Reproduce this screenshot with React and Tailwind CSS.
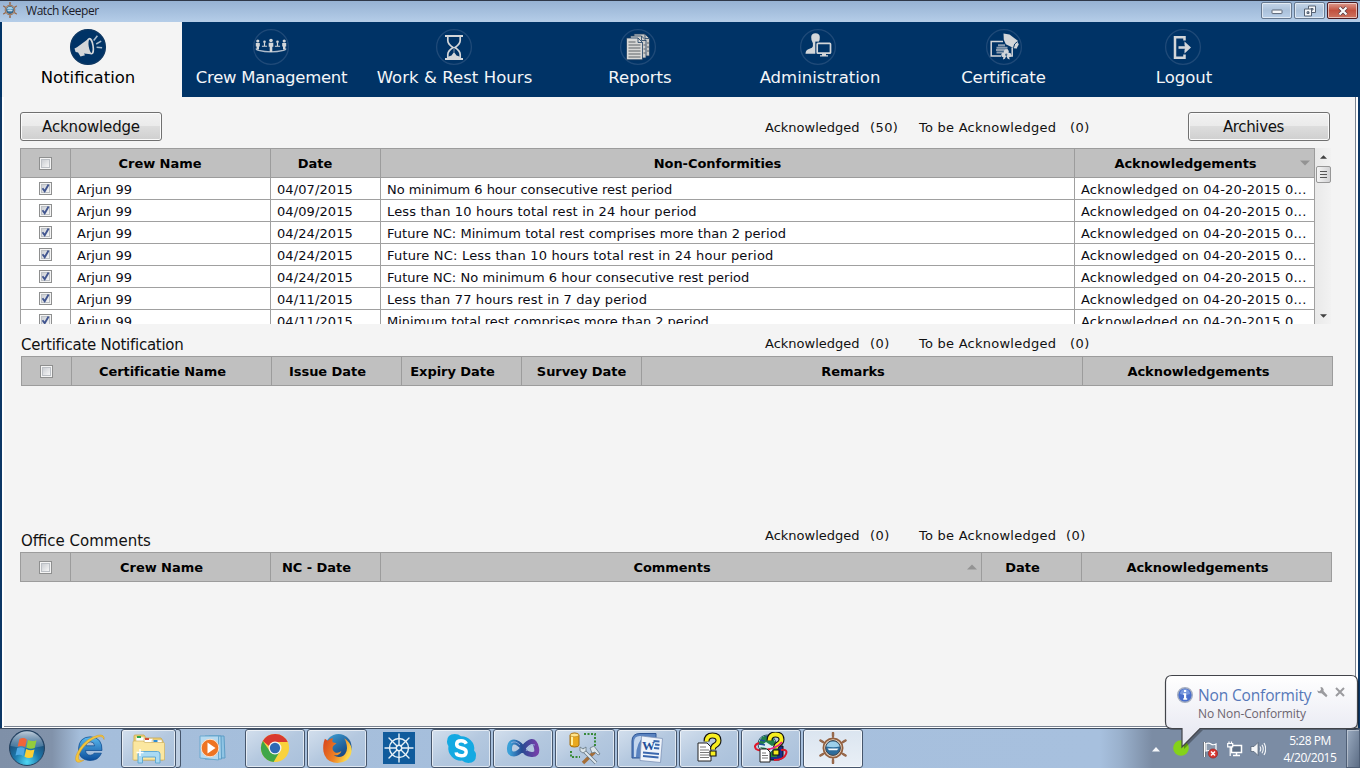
import React from "react";

const VERDANA = "font-['DejaVu_Sans',Verdana,sans-serif]";
const SEGOE = "font-['Open_Sans','Noto_Sans',sans-serif]";

/* ---------- Ship wheel, used by the title bar and the taskbar ---------- */
function ShipWheel({ className }) {
  return (
    <svg viewBox="0 0 32 32" className={className}>
      <g stroke="#97694c" strokeWidth="1.500" strokeLinecap="round">
        <path d="M16 1v30M3.500 8.500l25 15M3.500 23.500l25-15" />
        <path d="M16 1v3M16 28v3M3.500 8.500l2.500 1.500M26 22l2.500 1.500M3.500 23.500 6 22M26 10l2.500-1.500" strokeWidth="2.500" />
      </g>
      <circle cx="16" cy="16" r="9.600" fill="#e8d9c8" stroke="#93603f" strokeWidth="1.800" />
      <circle cx="16" cy="16" r="7.400" fill="#2c6c9c" stroke="#444449" strokeWidth="1" />
      <path d="M9.300 14.500a7 7 0 0 1 13.400 0q-6 1.500-13.400 0z" fill="#9ccfeb" />
      <path d="M10.500 16.500h11l-1.500 1.800h-8z" fill="#f4f8fc" />
    </svg>
  );
}

/* ---------- Navigation icons ---------- */
const ICON = "#d3d6d9";
function NavCircle({ active, children, className }) {
  return (
    <svg viewBox="0 0 38 38" className={`h-[38px] w-[38px] ${className || ""}`}>
      <circle cx="19" cy="19" r="17.4" fill="#003366" stroke={active ? "#0d3762" : "#1f4a78"} strokeWidth="1.3" />
      {children}
    </svg>
  );
}
const Megaphone = (
  <g>
    <path d="M5.5 20.5 8 19.3 20.5 10q3.8 3.5 3.5 9-.2 4-2.3 7.3L15 25.5l1 1.8-4.5 1.2-2.4-4-2.5-.6z" fill={ICON} />
    <ellipse cx="21.5" cy="18.2" rx="2.6" ry="7.6" transform="rotate(-9 21.5 18.2)" fill="#003366" stroke={ICON} strokeWidth="1.6" />
    <path d="M24.7 12.5l3.7-4.8M27.2 16l5-2.8M27.6 19.3l5.5.4" stroke="#a9bccd" strokeWidth="1.5" />
  </g>
);
const Crew = (
  <g fill={ICON}>
    <path d="M4.500 20.500q-1 1 2 1.800 12.500 3 25 0 3-.8 2-1.800" fill="none" stroke="#aebccb" strokeWidth="1.200" />
    <circle cx="5.800" cy="13" r="1.600" /><path d="M3.800 15h4v3.600h-.8v3H4.600v-3h-.8z" />
    <circle cx="32.200" cy="13" r="1.600" /><path d="M30.200 15h4v3.600h-.8v3H31v-3h-.8z" />
    <circle cx="19" cy="12.500" r="1.800" /><path d="M16.700 14.700h4.600v4h-1V24h-2.600v-5.300h-1z" />
    <circle cx="12.500" cy="13.700" r="1.300" /><path d="M11.900 15h1.200v2.700h2v1.100h-5.200v-1.100h2z" />
    <circle cx="25.500" cy="13.700" r="1.300" /><path d="M24.900 15h1.200v2.700h2v1.100h-5.200v-1.100h2z" />
  </g>
);
const Hourglass = (
  <g>
    <path d="M10 8h18M10 31h18" stroke={ICON} strokeWidth="1.8" />
    <path d="M12.800 9v3.500q0 3.500 5.200 7-5.200 3.500-5.200 7V30M25.200 9v3.500q0 3.500-5.200 7 5.200 3.500 5.200 7V30" fill="none" stroke={ICON} strokeWidth="1.700" />
    <path d="M12 30q1-2 4.500-2.500L19 24l2.500 3.500Q25 28 26 30z" fill={ICON} />
    <path d="M19 20v4" stroke="#7d94ab" />
  </g>
);
const Reports = (
  <g stroke="#1c3d5f" strokeWidth=".8">
    <path d="M15 6h11l4.500 4.500V28H15z" fill="#c9c9c7" />
    <path d="M11.500 8h11l4.500 4.500V30h-15.500z" fill="#d0d0ce" />
    <path d="M7.500 10h11.500l4.500 4.500V31.800h-16z" fill="#d8d8d6" />
    <path d="M19 10v4.500h4.500M22.500 8v4.500H27M26 6v4.500h4.500" fill="none" />
    <path d="M9.500 14h7M9.500 17h12M9.500 20h12M9.500 23h12M9.500 26h12M9.500 29h12M24.500 17h2M24.500 21h2M24.500 25h2M28 15h2M28 19h2M28 23h2" stroke="#5d6266" strokeWidth="1.100" />
  </g>
);
const Admin = (
  <g>
    <path d="M12.200 9q.3-3.700 4.300-3.700T20.800 9q.2 3.500-1.400 6l-.4 3.500v7.300H6.500q0-4 4-5 3.200-.9 3.400-2.500v-3q-1.900-2.500-1.700-6.300z" fill={ICON} />
    <path d="M16.300 13.600h17v13.600h-17z" fill="#003366" />
    <rect x="18.200" y="15.400" width="13.300" height="9.800" rx=".8" fill="#003366" stroke={ICON} strokeWidth="1.700" />
    <path d="M23 26h4v1.200h2v1.300h-8v-1.300h2z" fill={ICON} />
  </g>
);
const Certificate = (
  <g>
    <path d="M18 13.500H6.200V28H16M27.200 19.500V28h-2.500" fill="none" stroke={ICON} strokeWidth="1.500" />
    <path d="M13 17.300h7M11.500 19.700h11M11 22.100h12M11.500 24.500h8.500" stroke="#8b9db0" strokeWidth="2" />
    <path d="m18.500 5.500 6 1 8.300 6.300q.6 3.700-3.300 7.700l-8.700-4.300-2-4.500z" fill={ICON} />
    <path d="M28.500 19.800q.3-4.300 4-6.300" fill="none" stroke="#003366" strokeWidth="1" />
    <path d="m29.200 20 3.600-5.500 1 1.700-2.300 4.600z" fill={ICON} />
    <circle cx="21.300" cy="23.700" r="2.500" fill={ICON} /><circle cx="18.500" cy="27" r="2.300" fill={ICON} /><circle cx="24" cy="27" r="2.300" fill={ICON} />
    <path d="m18.700 28-.8 3.500 2-.8 1.500-3M23.800 28l.9 3.500-2-.8-1.500-3" fill={ICON} />
    <circle cx="21.300" cy="26.500" r="1.100" fill="#496b8d" />
  </g>
);
const Logout = (
  <g>
    <path d="M20.500 12.500V9.200H11v20.600h9.500v-3.300" fill="none" stroke={ICON} strokeWidth="2.500" />
    <path d="M14.500 19.500H24" stroke={ICON} strokeWidth="2.600" />
    <path d="m20.500 13.500 6.500 6-6.500 6v-3.400l1-2.600-1-2.600z" fill={ICON} />
  </g>
);

const NAV = [
  { label: "Notification", icon: Megaphone, active: true, w: "w-[180px] pr-2", shift: "", ls: "" },
  { label: "Crew Management", icon: Crew, w: "w-[179px]", shift: "mr-[2px]", ls: "tracking-[-0.27px]" },
  { label: "Work & Rest Hours", icon: Hourglass, w: "w-[187px]", shift: "mr-[2px]", ls: "tracking-[0.06px]" },
  { label: "Reports", icon: Reports, w: "w-[184px]", shift: "mr-1", ls: "" },
  { label: "Administration", icon: Admin, w: "w-[176px]", shift: "mr-[5px]", ls: "" },
  { label: "Certificate", icon: Certificate, w: "w-[191px]", shift: "", ls: "tracking-[-0.1px]" },
  { label: "Logout", icon: Logout, w: "w-[170px]", shift: "mr-[2px]", ls: "" },
];

function Nav() {
  return (
    <nav className="flex h-[75px] shrink-0 bg-[#003366]">
      {NAV.map((n) => (
        <div
          key={n.label}
          className={`flex shrink-0 flex-col items-center pt-[6px] ${n.w} ${n.active ? "bg-[#f4f4f4] text-black" : "text-[#f4f6f8]"}`}
        >
          <NavCircle active={n.active} className={n.shift}>{n.icon}</NavCircle>
          <span className={`mt-[1px] text-[16.5px] leading-[22px] whitespace-nowrap ${n.ls}`}>{n.label}</span>
        </div>
      ))}
    </nav>
  );
}

/* ---------- Window chrome ---------- */
function TitleBar() {
  const btn = "flex h-[17px] items-center justify-center rounded-[2px] border shadow-[inset_0_0_0_1px_rgba(255,255,255,0.55)]";
  return (
    <header className="flex h-[22px] shrink-0 items-start border-t border-[#2e3748] bg-linear-to-b from-[#96b2d3] to-[#b5cde8]">
      <ShipWheel className="mt-[1px] ml-[2px] h-4 w-4" />
      <span className={`${SEGOE} ml-2 text-[12px] leading-[20px] tracking-[-0.45px] text-[#1b1b28]`}>Watch Keeper</span>
      <div className="mt-[1px] mr-[2px] ml-auto flex gap-[2px]">
        <div className={`${btn} w-[31px] border-[#66788f] bg-linear-to-b from-[#c4d5e8] via-[#abc1da] to-[#b9cfe8]`}>
          <svg viewBox="0 0 12 6" className="mt-[3px] h-[6px] w-3"><rect x="1" y="1" width="10" height="3.600" rx=".6" fill="#f4f6f9" stroke="#5a6575" /></svg>
        </div>
        <div className={`${btn} w-[31px] border-[#66788f] bg-linear-to-b from-[#c4d5e8] via-[#abc1da] to-[#b9cfe8]`}>
          <svg viewBox="0 0 12 12" className="h-3 w-3" fill="#f4f6f9" stroke="#566273">
            <path fillRule="evenodd" d="M4.500 1h7v6.500h-7zM7 3.500h2V5H7z" />
            <path fillRule="evenodd" d="M.5 4h7v7h-7zM3 6.800h2v1.700H3z" />
          </svg>
        </div>
        <div className={`${btn} w-[31px] border-[#4d1a20] bg-linear-to-b from-[#dc9a8e] via-[#c2513f] to-[#cd7360]`}>
          <svg viewBox="0 0 12 10" className="h-[10px] w-3">
            <path d="m2.500 1.500 7 7M9.500 1.500l-7 7" stroke="#553a42" strokeWidth="3.800" />
            <path d="m2.500 1.500 7 7M9.500 1.500l-7 7" stroke="#fafafa" strokeWidth="2.200" />
          </svg>
        </div>
      </div>
    </header>
  );
}

/* ---------- Tables ---------- */
function Checkbox({ checked }) {
  return (
    <svg viewBox="0 0 13 13" className="h-[13px] w-[13px] shrink-0">
      <defs>
        <linearGradient id="cb" x1="0" y1="0" x2="1" y2="1">
          <stop offset="0" stopColor="#c9ccd1" /><stop offset="1" stopColor="#f8f8f8" />
        </linearGradient>
      </defs>
      <rect x=".5" y=".5" width="12" height="12" fill="#f4f4f4" stroke="#8e8f8f" />
      <rect x="2.500" y="2.500" width="8" height="8" fill="url(#cb)" stroke="#bcc0c5" />
      {checked && <path d="m3.500 6.200 2.200 3L9.600 2.600" fill="none" stroke="#41558f" strokeWidth="1.900" />}
    </svg>
  );
}

function Header({ cols, className }) {
  return (
    <div className={`flex h-[30px] shrink-0 border border-r-0 border-[#9c9c9c] bg-[#c0c0c0] text-[13px] font-bold ${className}`}>
      <div className="flex w-[50px] items-center justify-center border-r border-[#9c9c9c]"><Checkbox /></div>
      {cols.map((c) => (
        <div key={c.label} className={`flex items-center border-r border-[#9c9c9c] ${c.w}`}>
          <span className="flex-1 pt-[2px] text-center tracking-[-0.05px] whitespace-nowrap">{c.label}</span>
          {!c.flush && (
            <span className="flex w-[18px] justify-center">
              {c.sort && (
                <svg viewBox="0 0 10 6" className="h-[6px] w-[10px]">
                  <path d={c.sort === "down" ? "M0 .5h10L5 5.500z" : "M0 5.500h10L5 .5z"} fill="#939393" />
                </svg>
              )}
            </span>
          )}
        </div>
      ))}
    </div>
  );
}

const ROWS = [
  ["04/07/2015", "No minimum 6 hour consecutive rest period", "tracking-[-0.03px]"],
  ["04/09/2015", "Less than 10 hours total rest in 24 hour period", "tracking-[0.15px]"],
  ["04/24/2015", "Future NC: Minimum total rest comprises more than 2 period", "tracking-[0.05px]"],
  ["04/24/2015", "Future NC: Less than 10 hours total rest in 24 hour period", "tracking-[0.19px]"],
  ["04/24/2015", "Future NC: No minimum 6 hour consecutive rest period", "tracking-[0.06px]"],
  ["04/11/2015", "Less than 77 hours rest in 7 day period", "tracking-[0.14px]"],
  ["04/11/2015", "Minimum total rest comprises more than 2 period", "tracking-[-0.03px]"],
];

function Counts({ acked, pending, className, gap = "w-[151px]" }) {
  return (
    <div className={`flex text-[13px] leading-[18px] text-[#111] ${className || ""}`}>
      <span className="w-[105px]">Acknowledged</span>
      <span className="w-[49px] tracking-[0.4px]">{acked}</span>
      <span className={`${gap} tracking-[0.25px] whitespace-nowrap`}>To be Acknowledged</span>
      <span className="tracking-[0.5px]">{pending}</span>
    </div>
  );
}

function PushButton({ children, className }) {
  return (
    <button className={`h-[29px] w-[142px] rounded-[3px] border border-[#707070] bg-[linear-gradient(#f2f2f2_0%,#ebebeb_48%,#dddddd_50%,#cfcfcf_100%)] text-[15px] leading-[26px] text-[#111] shadow-[inset_0_0_0_1px_#fbfbfb] ${className}`}>
      {children}
    </button>
  );
}

function ScrollBar() {
  return (
    <div className="flex h-[176px] w-4 flex-col items-center bg-linear-to-r from-[#e9e9e9] to-[#f2f2f2]">
      <svg viewBox="0 0 8 4" className="mt-[7px] h-1 w-[7px]"><path d="M0 4 4 0l4 4z" fill="#404040" /></svg>
      <div className="mt-[7px] flex h-[17px] w-[15px] flex-col items-center justify-center gap-[2px] rounded-[2px] border border-[#979797] bg-linear-to-r from-[#f5f5f5] to-[#d2d2d4]">
        <i className="h-px w-[7px] bg-[#555]" />
        <i className="h-px w-[7px] bg-[#555]" />
        <i className="h-px w-[7px] bg-[#555]" />
      </div>
      <svg viewBox="0 0 8 4" className="mt-auto mb-[6px] h-1 w-[7px]"><path d="M0 0h8L4 4z" fill="#404040" /></svg>
    </div>
  );
}

function Content() {
  return (
    <main className="flex h-[631px] shrink-0 border-x-2 border-[#0c3766] bg-white pr-[2px] pb-[1px] pl-[2px]">
      <div className="flex flex-1 flex-col border-r border-b border-[#7a8391] bg-[#f4f4f4] pl-4">
        <div className="mt-[15px] flex h-[29px] items-start">
          <PushButton className="tracking-[-0.15px]">Acknowledge</PushButton>
          <Counts acked="(50)" pending="(0)" className="mt-[7px] ml-[603px] w-[423px]" />
          <PushButton className="pr-[11px] tracking-[-0.35px]">Archives</PushButton>
        </div>
        <div className="mt-[7px] flex h-[176px] overflow-hidden">
          <div className="flex w-[1295px] shrink-0 flex-col">
            <Header
              className="w-[1295px]"
              cols={[
                { label: "Crew Name", w: "w-[200px] pr-[3px]" },
                { label: "Date", w: "w-[110px] pr-[3px]" },
                { label: "Non-Conformities", w: "w-[694px] pr-[2px]" },
                { label: "Acknowledgements", w: "w-[240px]", sort: "down" },
              ]}
            />
            {ROWS.map((r, i) => (
              <div key={i} className="flex h-[22px] shrink-0 border-b border-l border-[#a0a0a0] bg-white text-[13px] leading-[23px] text-[#0b0b14]">
                <div className="flex w-[50px] items-center justify-center border-r border-[#a0a0a0]"><Checkbox checked /></div>
                <div className="w-[200px] border-r border-[#a0a0a0] pl-[6px]">Arjun 99</div>
                <div className="w-[110px] border-r border-[#a0a0a0] pl-[6px] tracking-[0.1px]">{r[0]}</div>
                <div className={`w-[694px] border-r border-[#a0a0a0] pl-[6px] ${r[2]}`}>{r[1]}</div>
                <div className="w-[240px] border-r border-[#a0a0a0] pl-[6px] tracking-[0.2px] whitespace-nowrap">Acknowledged on 04-20-2015 0...</div>
              </div>
            ))}
          </div>
          <ScrollBar />
        </div>

        <div className="flex h-8 items-start pt-[10px] pl-px">
          <h2 className="w-[744px] pt-[1px] text-[15px] leading-[20px] tracking-[-0.26px] text-[#111]">Certificate Notification</h2>
          <Counts acked="(0)" pending="(0)" className="pt-[1px]" />
        </div>
        <Header
          className="ml-px w-[1312px]"
          cols={[
            { label: "Certificatie Name", w: "w-[200px]" },
            { label: "Issue Date", w: "w-[130px]" },
            { label: "Expiry Date", w: "w-[120px]" },
            { label: "Survey Date", w: "w-[120px]", flush: true },
            { label: "Remarks", w: "w-[441px]" },
            { label: "Acknowledgements", w: "w-[250px]" },
          ]}
        />

        <div className="mt-[134px] flex h-8 items-start pt-[6px] pl-px">
          <h2 className="w-[744px] pt-[5px] text-[15px] leading-[20px] text-[#111]">Office Comments</h2>
          <Counts acked="(0)" pending="(0)" className="pt-[1px]" gap="w-[147px]" />
        </div>
        <Header
          className="w-[1312px]"
          cols={[
            { label: "Crew Name", w: "w-[200px]" },
            { label: "NC - Date", w: "w-[110px]" },
            { label: "Comments", w: "w-[601px]", sort: "up" },
            { label: "Date", w: "w-[100px]" },
            { label: "Acknowledgements", w: "w-[250px]" },
          ]}
        />
      </div>
    </main>
  );
}

/* ---------- Taskbar icons ---------- */
function StartOrb() {
  return (
    <svg viewBox="0 0 38 38" className="h-[38px] w-[38px]">
      <defs>
        <radialGradient id="orb" cx=".5" cy=".9" r=".8">
          <stop offset="0" stopColor="#4fd8f4" /><stop offset=".45" stopColor="#1c78ac" /><stop offset="1" stopColor="#1d3e63" />
        </radialGradient>
        <linearGradient id="orbTop" x1="0" y1="0" x2="0" y2="1">
          <stop offset="0" stopColor="#dce8f2" stopOpacity=".85" /><stop offset="1" stopColor="#8fb2cf" stopOpacity=".3" />
        </linearGradient>
      </defs>
      <circle cx="19" cy="19" r="17.500" fill="url(#orb)" stroke="#24415f" />
      <path d="M2.500 17a16.600 16.600 0 0 1 33 0q-16 4-33 0z" fill="url(#orbTop)" />
      <path d="M11.500 10q4-2 7.300.5L17.200 18q-3.700-2-7.600-.4z" fill="#f0653a" />
      <path d="M20 11q4 2 8.500.2l-1.800 7.800q-4.400 1.600-8.300-.5z" fill="#94cc3c" />
      <path d="M9.200 19q4-1.700 7.700.4l-1.700 7.500q-3.600-2.200-7.700-.4z" fill="#4fa9e4" />
      <path d="M18.200 20q4 2.200 8.300.5l-1.800 7.700q-4.200 1.700-8.200-.5z" fill="#fccf35" />
    </svg>
  );
}
function IE() {
  return (
    <svg viewBox="0 0 32 32" className="h-8 w-8">
      <defs><linearGradient id="ie" x1="0" y1="0" x2="0" y2="1"><stop offset="0" stopColor="#5ab9ee" /><stop offset="1" stopColor="#0b4d9c" /></linearGradient></defs>
      <path d="M29 18.500H12.500q.6 4.700 4.800 4.700 2.700 0 3.800-2h7.300Q25.500 28.500 17 28.500 5.500 28 5.500 16.800 6 5 17.300 4.800 29.500 5.300 29 18.500zM12.700 13.800h9q-.5-4-4.400-4-3.900 0-4.600 4z" fill="url(#ie)" stroke="#0c478c" strokeWidth=".7" />
      <path d="M31 7.500Q32 2 25 3.200 14 6 7 16 1 25 3 29q2.500 3 8-1-5 1.500-5.500-1.500Q5 22 11 14.500 18 7 25.500 4.800 30 3.800 31 7.500z" fill="#f5c63c" stroke="#d49a22" strokeWidth=".5" />
    </svg>
  );
}
function Explorer() {
  return (
    <svg viewBox="0 0 34 32" className="h-8 w-[34px]">
      <path d="M2 4q0-1 1-1h9l2 3h15l2 3v19H2z" fill="#efd47c" stroke="#c9a64c" strokeWidth=".8" />
      <path d="M4 5h8v5H4zM12 6.500h9v5h-9zM20 8h10v5H20z" fill="#fff" stroke="#d2b974" strokeWidth=".5" />
      <path d="M5 4h4v2H5z" fill="#2ba44a" /><path d="M13 6h4v2h-4z" fill="#d34b35" /><path d="M21.500 8h4v2h-4z" fill="#2e8ccf" />
      <path d="M1 10q0-1 1-1h9l2 1.500h18.500q1 0 1 1V28H1z" fill="#fbe7a0" stroke="#d0b25e" strokeWidth=".7" />
      <path d="M6 31v-9q0-2.500 2.500-2.500h17Q28 19.500 28 22v9h-4.500v-6h-13v6z" fill="#a9daf3" stroke="#61a9d2" />
      <path d="M8 17v7M4.500 20.500h7" stroke="#fff" strokeWidth="1.500" />
    </svg>
  );
}
function MediaPlayer() {
  return (
    <svg viewBox="0 0 32 32" className="h-8 w-8">
      <path d="M12 4h15l1 22H12z" fill="#8fc4e4" stroke="#5d9dc6" /><path d="M8 4h16l.5 23H8z" fill="#a5d2ec" stroke="#5d9dc6" />
      <path d="M3 4h18.500v24L3 26z" fill="#b6daf0" stroke="#6aa9cf" />
      <circle cx="13" cy="16" r="8.800" fill="#ee7423" stroke="#fbe0ca" strokeWidth="1" />
      <path d="M10.500 10.500v11l8-5.500z" fill="#fff" />
    </svg>
  );
}
function Chrome() {
  return (
    <svg viewBox="0 0 32 32" className="h-[30px] w-[30px]">
      <circle cx="16" cy="16" r="15" fill="#f9d23c" />
      <path d="M3 8.500A15 15 0 0 1 29.500 9.500H16a6.500 6.500 0 0 0-6.200 4.500z" fill="#d93a30" />
      <path d="M3 8.500A15 15 0 0 0 14.500 31l6.700-11.500a6.600 6.600 0 0 1-11.400-1z" fill="#3fa648" />
      <circle cx="16" cy="16" r="6.900" fill="#f4f4f4" /><circle cx="16" cy="16" r="5.500" fill="#2e69b5" />
    </svg>
  );
}
function Firefox() {
  return (
    <svg viewBox="0 0 32 32" className="h-[31px] w-[31px]">
      <defs>
        <linearGradient id="ff" x1="0" y1="0" x2="1" y2=".4"><stop offset="0" stopColor="#d8431c" /><stop offset=".6" stopColor="#ee8225" /><stop offset="1" stopColor="#fbd84a" /></linearGradient>
        <linearGradient id="ffb" x1="0" y1="0" x2=".7" y2="1"><stop offset="0" stopColor="#3fa3d8" /><stop offset="1" stopColor="#123b78" /></linearGradient>
      </defs>
      <circle cx="17" cy="14.500" r="13.500" fill="url(#ffb)" />
      <path d="M3 6l3 2q2-2.500 5.500-2.500-1.500 2-.5 4l4 1-3.500 3q-2 4 2 6.500 4 1 6.500-1.500-1.500 5-8 4.500 5 3.500 10 .5 5-4 3.500-11-.5-4-2.500-7 6.500 4 7.500 11 .5 7-5 11.500-6 4-13.500 2.500Q3 28 1.500 19 .5 12 3 6z" fill="url(#ff)" />
    </svg>
  );
}
function Helm() {
  return (
    <svg viewBox="0 0 32 32" className="h-8 w-8">
      <path d="M0 0h32v32H0z" fill="#105b9c" />
      <g fill="none" stroke="#e7f1f7" strokeWidth="1.400" strokeLinecap="round">
        <circle cx="16" cy="16" r="9.500" /><circle cx="16" cy="16" r="2.700" />
        <path d="M16 2v11M16 19v11M2 16h11M19 16h11M6 6l8 8M18 18l8 8M26 6l-8 8M14 18l-8 8" />
      </g>
    </svg>
  );
}
function Skype() {
  return (
    <svg viewBox="0 0 32 32" className="h-[31px] w-[31px]">
      <path d="M9 1Q1 1 1 9q0 2.500 1.500 4.500Q1.500 20 6 24.500q4.500 4.500 10.500 4Q19 31 23 31q8 0 8-8 0-3-2-5 1-6-3.500-10.500Q21 3 15.500 3.300 13 1 9 1z" fill="#14a9e2" />
      <path d="M21 11q-1.500-3-5.500-3-4.500 0-4.500 3.700 0 2.800 4.800 3.800 5 1 5 4 0 3.900-5 3.900T10.500 20" fill="none" stroke="#fff" strokeWidth="3.600" />
    </svg>
  );
}
function Infinity8() {
  return (
    <svg viewBox="0 0 34 20" className="h-5 w-[34px]">
      <defs><linearGradient id="vs"><stop offset="0" stopColor="#3aa0d8" /><stop offset=".45" stopColor="#274b93" /><stop offset="1" stopColor="#7340a8" /></linearGradient></defs>
      <path d="M17 10Q12 4 8 4t-4.500 6T8 16q4 0 9-6t8.500-6.500T30.500 10 25.500 16.500 17 10z" fill="none" stroke="url(#vs)" strokeWidth="5" />
      <path d="M5 5q4-3 9 2M20 13q5-8 9-6" fill="none" stroke="#9cb7e4" strokeWidth="1" opacity=".8" />
    </svg>
  );
}
function DbTools() {
  return (
    <svg viewBox="0 0 32 34" className="h-[34px] w-8">
      <path d="M1 4q0-2 4.500-2T10 4v10q0 2-4.500 2T1 14z" fill="#e9a91f" stroke="#a46f12" /><path d="M3 5v9" stroke="#fff0a0" strokeWidth="2" /><ellipse cx="5.500" cy="4" rx="4.300" ry="1.800" fill="#ffe48c" stroke="#a46f12" strokeWidth=".5" />
      <path d="M15 3h11v12M2 20v6h9" fill="none" stroke="#388a39" strokeWidth="2" strokeDasharray="2 1.500" />
      <path d="M25.500 21 14 32" stroke="#a56e37" strokeWidth="3.500" /><path d="m13 18 14 14" stroke="#687987" strokeWidth="3.500" /><path d="m13 18 14 14" stroke="#e0e9ef" strokeWidth="2" />
      <path d="M11 16v4l3 2 3-2v-4l-3 2zM21 17l4-2 6 8-2 1-3-3-3 1z" fill="#dce5ea" stroke="#667682" strokeWidth=".8" />
    </svg>
  );
}
function Word() {
  return (
    <svg viewBox="0 0 32 32" className="h-8 w-8">
      <path d="M1 9Q1 1.500 9 1.500h16V26H1z" fill="#5a83c0" stroke="#2e5696" /><path d="M3 10q0-6 6-6h5Q5 10 5 25H3z" fill="#c3d6ee" />
      <path d="m10.500 4 21 2.500-2 24-20.500-2z" fill="#eef3fa" stroke="#7d93b8" strokeWidth=".8" />
      <text x="11" y="17.500" fontSize="13" fontWeight="700" fontFamily="Liberation Serif, serif" fill="#234f99">W</text>
      <path d="m22.500 9 6 .5M24 12.500l4.500.5M23 16l5.200.5M12 20.500l16 1.500M12 24l15.500 1.500" stroke="#3a67ad" strokeWidth="1.800" />
    </svg>
  );
}
function QuestionMark() {
  return (
    <g>
      <path d="M13.500 9.500q0-6 6-6t6 5q0 3-3.500 5-2 1-2 4" fill="none" stroke="#111" strokeWidth="6" />
      <path d="M13.500 9.500q0-6 6-6t6 5q0 3-3.500 5-2 1-2 4" fill="none" stroke="#f7ee21" strokeWidth="3.800" />
      <path d="M17 19h6v5h-6z" fill="#f7ee21" stroke="#111" strokeWidth="1.200" />
    </g>
  );
}
function HelpDoc() {
  return (
    <svg viewBox="0 0 32 32" className="h-8 w-8">
      <path d="M5 11h9l4 4v14H5z" fill="#fff" stroke="#222" />
      <path d="M7 15h6M7 18h9M7 20.500h9M7 23h9M7 25.500h9" stroke="#777" />
      <QuestionMark />
    </svg>
  );
}
function HelpGlobe() {
  return (
    <svg viewBox="0 0 34 32" className="h-8 w-[34px]">
      <path d="M16 14h13v12l-4 2h-9z" fill="#18308c" stroke="#111" /><path d="M17 15h6v10h-6z" fill="#27843a" />
      <circle cx="13" cy="12" r="9" fill="#d9edf3" stroke="#27566b" /><path d="M8 5q6-3 11 1l3 6-4 2-6-4-4 3-4-1zM6 15l6 1v5" fill="#21804a" />
      <path d="M6 8l5 1M12 4l3 2M5 12l6 1" stroke="#214d9a" strokeWidth="1.500" />
      <path d="M5 11Q-1 13 2 17q4 3 14 0M27 18q7-1 5 4-2 6-12 6" fill="none" stroke="#e1172b" strokeWidth="2" />
      <g transform="translate(2 -1)"><QuestionMark /></g>
      <path d="M16 17q8-2 12-7" fill="none" stroke="#e0218a" strokeWidth="1.800" />
      <path d="M6 17h7l3 3v10H6z" fill="#fff" stroke="#222" /><path d="M8 21h4M8 23.500h6M8 26h6" stroke="#777" />
    </svg>
  );
}

const TASKS = [
  { id: "ie", icon: <IE />, plain: true },
  { id: "explorer", icon: <Explorer />, stacked: true },
  { id: "wmp", icon: <MediaPlayer />, plain: true },
  { id: "chrome", icon: <Chrome /> },
  { id: "firefox", icon: <Firefox /> },
  { id: "helm", icon: <Helm />, plain: true },
  { id: "skype", icon: <Skype /> },
  { id: "vs", icon: <Infinity8 /> },
  { id: "db", icon: <DbTools /> },
  { id: "word", icon: <Word /> },
  { id: "help", icon: <HelpDoc /> },
  { id: "globe", icon: <HelpGlobe /> },
  { id: "keeper", icon: <ShipWheel className="h-[32px] w-[32px]" />, active: true },
];

function Taskbar() {
  const shell = "rounded-[3px] border border-[#46566c] shadow-[inset_0_0_0_1px_rgba(255,255,255,0.6)]";
  const face = "bg-linear-to-br from-[#d3dfed] via-[#b4c8df] to-[#a9c0db]";
  return (
    <footer className="flex h-10 shrink-0 border-t border-[#3e4c60] bg-[linear-gradient(90deg,#7f90a8_0px,#8192aa_52px,#a5bedb_80px,#a7c0de_1100px,#9ab1cd_1120px,#7b8ca4_1152px,#7b8ca4_1360px)]">
      <div className="flex w-[59px] shrink-0 items-start pl-2"><StartOrb /></div>
      <div className="flex gap-[2px]">
        {TASKS.map((t) =>
          t.plain ? (
            <div key={t.id} className="flex h-[38px] w-[60px] items-center justify-center">{t.icon}</div>
          ) : t.stacked ? (
            <div key={t.id} className="flex w-[60px]">
              <div className={`${shell} ${face} flex h-[39px] w-[55px] items-center justify-center pb-px`}>{t.icon}</div>
              <div className="h-[39px] w-[5px] rounded-r-[3px] border-y border-r border-[#46566c] bg-[#bccde1]" />
            </div>
          ) : (
            <div
              key={t.id}
              className={`${shell} ${t.active ? "bg-linear-to-b from-[#dbe5f0] to-[#e9eff6]" : face} flex h-[39px] w-[60px] items-center justify-center pb-px`}
            >
              {t.icon}
            </div>
          )
        )}
      </div>
      <div className="ml-auto flex items-center pb-[2px]">
        <svg viewBox="0 0 8 5" className="mt-[3px] h-[5px] w-2"><path d="M0 4.500 4 0l4 4.500z" fill="#f5f7fa" /></svg>
        <svg viewBox="0 0 16 16" className="ml-[13px] h-4 w-4"><circle cx="8" cy="8" r="7.800" fill="#84d21a" /></svg>
        <svg viewBox="0 0 16 18" className="ml-[13px] mt-1 h-[18px] w-4">
          <path d="M2.500 1v15" stroke="#2f3a48" strokeWidth="3" /><path d="M4 2.500q3-1 5 .5t5 0V10q-3 1-5 0t-5 0z" fill="#8b9aad" stroke="#fff" strokeWidth="1.200" /><path d="M2.500 1v15" stroke="#fff" strokeWidth="1.600" />
          <circle cx="11" cy="12.500" r="4.600" fill="#d8362f" stroke="#8f1e1c" strokeWidth=".6" /><path d="m9 10.500 4 4M13 10.500l-4 4" stroke="#fff" strokeWidth="1.500" />
        </svg>
        <svg viewBox="0 0 16 16" className="ml-[9px] mt-[2px] h-4 w-4">
          <path d="M4.500 4.500h10v7h-10z" fill="#5f7087" stroke="#fff" strokeWidth="1.500" /><path d="M6 14.500h7M9.500 12v2" stroke="#fff" strokeWidth="1.500" />
          <path d="M.7 2.500h5v3.300h-5zM2 .5v2M4.500.5v2M3.200 6v9" fill="#7b8ca4" stroke="#fff" strokeWidth="1.200" />
        </svg>
        <svg viewBox="0 0 16 16" className="ml-[7px] mt-[2px] h-4 w-4">
          <path d="M1 5.500h3l4-4v13l-4-4H1z" fill="#f4f6f8" stroke="#4d5b6e" strokeWidth=".7" />
          <path d="M10 5.500q1.500 2.500 0 5M12 3.800q2.500 4.200 0 8.400M14 2q3.400 6 0 12" fill="none" stroke="#f4f6f8" strokeWidth="1.100" />
        </svg>
        <div className={`${SEGOE} ml-[14px] mt-[2px] w-[60px] text-center text-[12px] leading-[17px] tracking-[-0.45px] whitespace-nowrap text-white`}>
          <div>5:28 PM</div>
          <div>4/20/2015</div>
        </div>
        <div className="mt-[2px] ml-[6px] h-[39px] w-[14px] border border-[#4f5f76] bg-linear-to-br from-[#9babc0] to-[#5d6e86] shadow-[inset_1px_1px_0_rgba(255,255,255,0.35)]" />
      </div>
    </footer>
  );
}

/* ---------- Balloon over the tray ---------- */
function Balloon() {
  return (
    <div className={`${SEGOE} absolute top-[674px] left-[1164px] h-[78px] w-[196px]`}>
      <svg viewBox="0 0 196 78" className="absolute inset-0 h-[78px] w-[196px]">
        <defs><linearGradient id="bal" x1="0" y1="0" x2="0" y2="1"><stop offset="0" stopColor="#ffffff" /><stop offset="1" stopColor="#e4e5f0" /></linearGradient></defs>
        <path d="M9 4h180q6 0 6 6v40q0 6-6 6H39L20 75V56H9q-6 0-6-6V10q0-6 6-6z" fill="#000" opacity=".3" />
        <path d="M8 1.500h179q6.500 0 6.500 6.500v40q0 6.500-6.500 6.500H36L18 73V54.500H8q-6.500 0-6.500-6.500V8q0-6.500 6.500-6.500z" fill="url(#bal)" stroke="#42444a" strokeWidth="1.200" />
      </svg>
      <div className="relative flex pt-[11px] pl-[13px]">
        <svg viewBox="0 0 16 16" className="mt-[2px] h-4 w-4 shrink-0">
          <circle cx="8" cy="8" r="7.300" fill="#4a6fcc" stroke="#a7afc0" strokeWidth="1.400" />
          <path d="M3 7a5 5 0 0 1 10 0q-5 2-10 0z" fill="#8fabe6" opacity=".7" />
          <path d="M7 3h2.200v2H7zM6.300 6.300h2.900v5h1v1.400H6.200v-1.400H7V7.700h-.7z" fill="#fff" />
        </svg>
        <div className="ml-[5px] whitespace-nowrap">
          <div className="text-[15.5px] leading-[21px] tracking-[-0.15px] text-[#5577b8]">Non Conformity</div>
          <div className="text-[12px] leading-[16px] tracking-[-0.1px] text-[#6b646f]">No Non-Conformity</div>
        </div>
        <svg viewBox="0 0 12 12" className="ml-[5px] mt-[1px] h-3 w-3 shrink-0">
          <path d="M1 4.500 3.500 5.200 5 3.800 4.500 1Q7 .5 7.700 3.500L7.500 5l4 4.500-1.300 1.700-4.700-4Q2 8 1 4.500z" fill="#9b9b9f" />
        </svg>
        <svg viewBox="0 0 10 10" className="ml-[7px] mt-[2px] h-[10px] w-[10px] shrink-0"><path d="m1 1 8 8M9 1 1 9" stroke="#9b9b9f" strokeWidth="2" /></svg>
      </div>
    </div>
  );
}

export default function App() {
  return (
    <div className={`${VERDANA} relative flex h-[768px] w-[1360px] flex-col overflow-hidden bg-[#f4f4f4]`}>
      <TitleBar />
      <div className="flex shrink-0 flex-col bg-[#003366] pl-[2px]">
        <Nav />
      </div>
      <Content />
      <Taskbar />
      <Balloon />
    </div>
  );
}
